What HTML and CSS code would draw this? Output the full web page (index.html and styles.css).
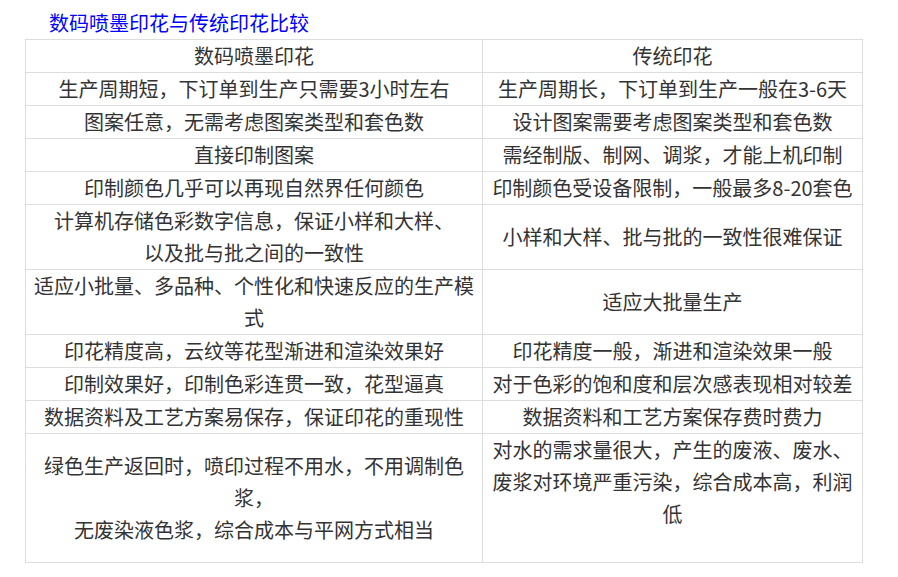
FILE: index.html
```html
<!DOCTYPE html>
<html lang="zh-CN">
<head>
<meta charset="utf-8">
<title>数码喷墨印花与传统印花比较</title>
<link rel="stylesheet" href="styles.css">
</head>
<body>
<div class="article">
  <h2 class="title">数码喷墨印花与传统印花比较</h2>
  <table class="compare">
    <colgroup><col class="col-a"><col class="col-b"></colgroup>
    <tbody>
      <tr><td>数码喷墨印花</td><td>传统印花</td></tr>
      <tr><td>生产周期短，下订单到生产只需要3小时左右</td><td>生产周期长，下订单到生产一般在3-6天</td></tr>
      <tr><td>图案任意，无需考虑图案类型和套色数</td><td>设计图案需要考虑图案类型和套色数</td></tr>
      <tr><td>直接印制图案</td><td>需经制版、制网、调浆，才能上机印制</td></tr>
      <tr><td>印制颜色几乎可以再现自然界任何颜色</td><td>印制颜色受设备限制，一般最多8-20套色</td></tr>
      <tr><td>计算机存储色彩数字信息，保证小样和大样、<br>以及批与批之间的一致性</td><td>小样和大样、批与批的一致性很难保证</td></tr>
      <tr><td>适应小批量、多品种、个性化和快速反应的生产模式</td><td>适应大批量生产</td></tr>
      <tr><td>印花精度高，云纹等花型渐进和渲染效果好</td><td>印花精度一般，渐进和渲染效果一般</td></tr>
      <tr><td>印制效果好，印制色彩连贯一致，花型逼真</td><td>对于色彩的饱和度和层次感表现相对较差</td></tr>
      <tr><td>数据资料及工艺方案易保存，保证印花的重现性</td><td>数据资料和工艺方案保存费时费力</td></tr>
      <tr><td>绿色生产返回时，喷印过程不用水，不用调制色浆，<br>无废染液色浆，综合成本与平网方式相当</td><td class="top">对水的需求量很大，产生的废液、废水、废浆对环境严重污染，综合成本高，利润低<br>&nbsp;</td></tr>
    </tbody>
  </table>
</div>
</body>
</html>
```
FILE: styles.css
```css
html, body {
  margin: 0;
  padding: 0;
  background: #fff;
}
.article {
  padding: 7px 0 0 25px;
  font-family: "Noto Sans CJK SC", "Microsoft YaHei", sans-serif;
  color: #333;
}
.title {
  margin: 0 0 0 24px;
  font-size: 20px;
  line-height: 32px;
  font-weight: normal;
  color: #0000ff;
}
.compare {
  border-collapse: collapse;
  table-layout: fixed;
  width: 837px;
  font-size: 20px;
  line-height: 32px;
}
.col-a { width: 457px; }
.col-b { width: 380px; }
.compare td {
  border: 1px solid #ddd;
  padding: 0 5px;
  text-align: center;
  vertical-align: middle;
}
.compare td.top {
  vertical-align: top;
}
```
